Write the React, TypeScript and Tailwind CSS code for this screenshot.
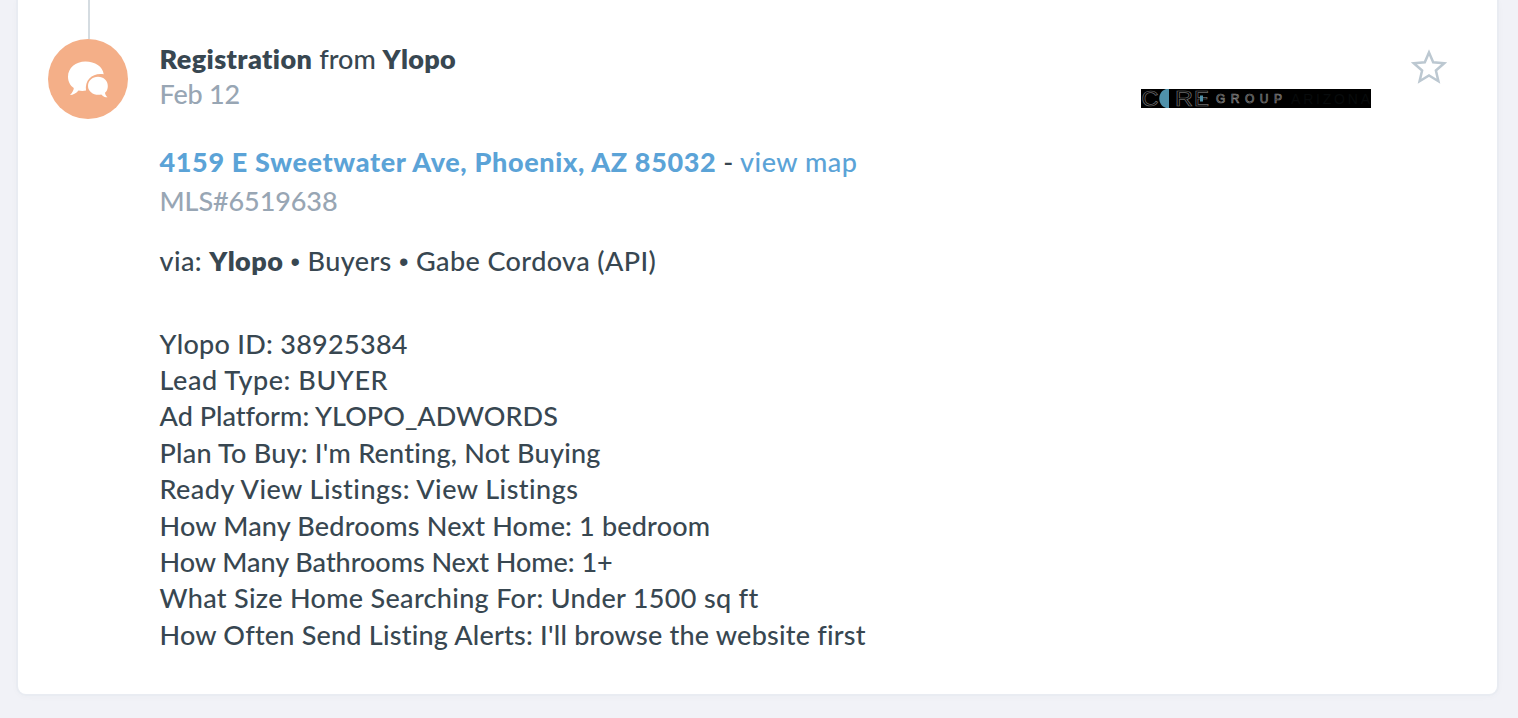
import React, { useState } from "react";

type Detail = {
  text: string;
  className: string;
};

const details: Detail[] = [
  { text: "Ylopo ID: 38925384", className: "tracking-[0.28px]" },
  { text: "Lead Type: BUYER", className: "tracking-[0.55px]" },
  { text: "Ad Platform: YLOPO_ADWORDS", className: "tracking-[0.03px]" },
  { text: "Plan To Buy: I'm Renting, Not Buying", className: "tracking-[0.24px]" },
  { text: "Ready View Listings: View Listings", className: "tracking-[0.46px]" },
  { text: "How Many Bedrooms Next Home: 1 bedroom", className: "tracking-[0.18px]" },
  { text: "How Many Bathrooms Next Home: 1+", className: "tracking-[-0.04px]" },
  { text: "What Size Home Searching For: Under 1500 sq ft", className: "tracking-[0.32px]" },
  { text: "How Often Send Listing Alerts: I'll browse the website first", className: "tracking-[0.22px]" },
];

const CommentsIcon: React.FC = () => (
  <svg viewBox="0 0 40 37" className="h-[37px] w-10" fill="#fff">
    <path d="M17.500 0.500C27 0.500 34.800 5.500 35.700 13.300C25.500 11.500 16.500 18 18 29.600C15 30.200 12.500 30 10.500 29.500C8 32.300 5.200 34 2 34C4.500 31.500 5.800 29 5.800 27C2.200 24.600 0 20.500 0 15.700C0 7 7.600 0.500 17.500 0.500Z" />
    <path d="M30 15.800C35.800 15.800 39.800 19.800 39.800 24.900C39.800 27.900 38.900 30.200 37 31.800C37.200 33.600 38 35 39.500 36.300C37 36.300 35 35.300 33.300 33.400C26.500 34.800 20 31 20 24.900C20 19.800 24.300 15.800 30 15.800Z" />
  </svg>
);

const GroupLogo: React.FC = () => (
  <svg width="230" height="19" viewBox="0 0 230 19" className="overflow-visible">
    <rect width="230" height="19" fill="#000" />
    <g fontFamily="Liberation Sans" fill="#000" stroke="#6d6d6d" strokeWidth="0.7">
      <text x="0.500" y="17" fontSize="22" textLength="17" lengthAdjust="spacingAndGlyphs">C</text>
      <text x="34" y="17" fontSize="22" textLength="18" lengthAdjust="spacingAndGlyphs">R</text>
      <text x="53" y="17" fontSize="22" textLength="15" lengthAdjust="spacingAndGlyphs">E</text>
      <text x="75" y="14" fontSize="12" stroke="#858585" textLength="66">GROUP</text>
      <text x="150" y="15" fontSize="14" textLength="79" fill="#080b0c" stroke="none">ARIZONA</text>
    </g>
    <path d="M28 0V19H25C16 16 16 3 25 0Z" fill="#4f91aa" />
    <rect x="59" y="6.500" width="3" height="6" fill="#4f91aa" />
  </svg>
);

const StarButton: React.FC = () => {
  const [starred, setStarred] = useState(false);

  return (
    <button type="button" aria-label="Star" className="cursor-pointer" onClick={() => setStarred(!starred)}>
      <svg width="36" height="36" viewBox="0 0 36 36" fill={starred ? "#bcc8d1" : "none"}>
        <path
          d="M18 3.500L22.200 13.300L33.200 14.300L24.900 21.500L27.400 32.200L18 26.500L8.600 32.200L11.100 21.500L2.800 14.300L13.800 13.300Z"
          stroke="#bcc8d1"
          strokeWidth="2.500"
        />
      </svg>
    </button>
  );
};

const Bullet: React.FC = () => <span className="font-['Liberation_Sans',sans-serif] leading-none">•</span>;

export default function App() {
  return (
    <div className="h-[718px] overflow-hidden bg-[#f1f2f7] pr-[21px] pl-[18px] font-['Lato',sans-serif] text-[27px] font-medium text-[#384751] [font-variant-ligatures:none]">
      <div className="flex h-[694px] rounded-b-[8px] bg-white pl-[30px] shadow-[0_0_0_2px_#e9ecf2,0_1px_8px_rgba(56,71,81,0.04)]">
        <div className="flex w-20 shrink-0 flex-col items-center">
          <div className="ml-[2px] h-[39px] w-[2px] bg-[#d5dce1]" />
          <div className="flex size-20 items-center justify-center rounded-full bg-[#f4af88]">
            <CommentsIcon />
          </div>
        </div>

        <div className="ml-[31.5px] w-[981.5px] shrink-0 whitespace-nowrap">
          <div className="mt-[41px] leading-[35px]">
            <b className="font-extrabold tracking-[0.4px]">Registration</b> from{" "}
            <b className="font-extrabold tracking-[0.3px]">Ylopo</b>
          </div>
          <div className="leading-[35px] tracking-[-0.2px] text-[#98a6b4]">Feb 12</div>

          <div className="mt-[31px] leading-[39px]">
            <a href="#" className="font-black tracking-[0.65px] text-[#5ba3d7]">4159 E Sweetwater Ave, Phoenix, AZ 85032</a>
            {" - "}
            <a href="#" className="tracking-[0.5px] text-[#5ba3d7]">view map</a>
          </div>
          <div className="leading-[39px] tracking-[-0.1px] text-[#98a6b4]">MLS#6519638</div>
          <div className="mt-[21px] leading-[39px] tracking-[0.4px]">
            via: <b className="font-extrabold">Ylopo</b> <Bullet /> Buyers <Bullet /> Gabe Cordova (API)
          </div>

          <div className="mt-[45.500px] leading-[36.400px]">
            {details.map((item) => (
              <div key={item.text} className={item.className}>{item.text}</div>
            ))}
          </div>
        </div>

        <div className="mt-[89px] shrink-0">
          <GroupLogo />
        </div>
        <div className="mt-[49px] ml-10 shrink-0">
          <StarButton />
        </div>
      </div>
    </div>
  );
}
